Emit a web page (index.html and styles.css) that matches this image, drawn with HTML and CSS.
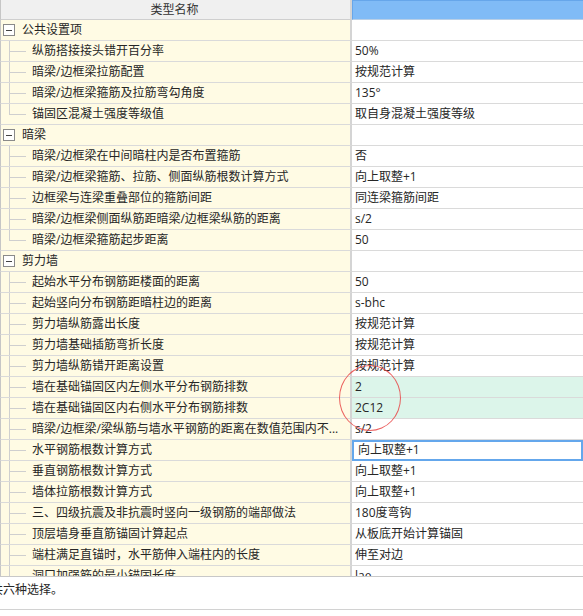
FILE: index.html
```html
<!DOCTYPE html>
<html lang="zh-CN">
<head>
<meta charset="utf-8">
<title>设置</title>
<link rel="stylesheet" href="styles.css">
</head>
<body>
<div class="page">
  <div class="table">
    <div class="row head">
      <div class="name">类型名称</div>
      <div class="val"></div>
    </div>

    <div class="row group">
      <div class="name"><span class="box"></span>公共设置项</div>
      <div class="val"></div>
    </div>
    <div class="row"><div class="name child">纵筋搭接接头错开百分率</div><div class="val">50%</div></div>
    <div class="row"><div class="name child">暗梁/边框梁拉筋配置</div><div class="val">按规范计算</div></div>
    <div class="row"><div class="name child">暗梁/边框梁箍筋及拉筋弯勾角度</div><div class="val">135°</div></div>
    <div class="row"><div class="name child last">锚固区混凝土强度等级值</div><div class="val">取自身混凝土强度等级</div></div>

    <div class="row group">
      <div class="name"><span class="box"></span>暗梁</div>
      <div class="val"></div>
    </div>
    <div class="row"><div class="name child">暗梁/边框梁在中间暗柱内是否布置箍筋</div><div class="val">否</div></div>
    <div class="row"><div class="name child">暗梁/边框梁箍筋、拉筋、侧面纵筋根数计算方式</div><div class="val">向上取整+1</div></div>
    <div class="row"><div class="name child">边框梁与连梁重叠部位的箍筋间距</div><div class="val">同连梁箍筋间距</div></div>
    <div class="row"><div class="name child">暗梁/边框梁侧面纵筋距暗梁/边框梁纵筋的距离</div><div class="val">s/2</div></div>
    <div class="row"><div class="name child last">暗梁/边框梁箍筋起步距离</div><div class="val">50</div></div>

    <div class="row group">
      <div class="name"><span class="box"></span>剪力墙</div>
      <div class="val"></div>
    </div>
    <div class="row"><div class="name child">起始水平分布钢筋距楼面的距离</div><div class="val">50</div></div>
    <div class="row"><div class="name child">起始竖向分布钢筋距暗柱边的距离</div><div class="val">s-bhc</div></div>
    <div class="row"><div class="name child">剪力墙纵筋露出长度</div><div class="val">按规范计算</div></div>
    <div class="row"><div class="name child">剪力墙基础插筋弯折长度</div><div class="val">按规范计算</div></div>
    <div class="row"><div class="name child">剪力墙纵筋错开距离设置</div><div class="val">按规范计算</div></div>
    <div class="row"><div class="name child">墙在基础锚固区内左侧水平分布钢筋排数</div><div class="val changed">2</div></div>
    <div class="row"><div class="name child">墙在基础锚固区内右侧水平分布钢筋排数</div><div class="val changed">2C12</div></div>
    <div class="row"><div class="name child">暗梁/边框梁/梁纵筋与墙水平钢筋的距离在数值范围内不...</div><div class="val">s/2</div></div>
    <div class="row"><div class="name child">水平钢筋根数计算方式</div><div class="val selected">向上取整+1</div></div>
    <div class="row"><div class="name child">垂直钢筋根数计算方式</div><div class="val">向上取整+1</div></div>
    <div class="row"><div class="name child">墙体拉筋根数计算方式</div><div class="val">向上取整+1</div></div>
    <div class="row"><div class="name child">三、四级抗震及非抗震时竖向一级钢筋的端部做法</div><div class="val">180度弯钩</div></div>
    <div class="row"><div class="name child">顶层墙身垂直筋锚固计算起点</div><div class="val">从板底开始计算锚固</div></div>
    <div class="row"><div class="name child">端柱满足直锚时，水平筋伸入端柱内的长度</div><div class="val">伸至对边</div></div>
    <div class="row"><div class="name child">洞口加强筋的最小锚固长度</div><div class="val">lae</div></div>
  </div>
  <div class="desc">共六种选择。</div>
  <div class="mark"></div>
</div>
</body>
</html>
```

FILE: styles.css
```css
html, body {
  margin: 0;
  padding: 0;
  background: #ffffff;
}

body {
  font-family: "Open Sans", "Noto Sans CJK SC", sans-serif;
  font-size: 12px;
  color: #262626;
}

.page {
  position: relative;
  width: 583px;
  height: 616px;
  overflow: hidden;
}

.table {
  height: 576px;
  overflow: hidden;
  border-bottom: 1px solid #c8c8c8;
}

.row {
  display: flex;
  height: 21px;
}

.name {
  box-sizing: border-box;
  width: 352px;
  flex: none;
  height: 21px;
  border-left: 1px solid #c6c6c6;
  border-right: 2px solid #d4d4d4;
  border-bottom: 1px solid #dadada;
  background: #fffbe4;
  line-height: 20px;
  white-space: nowrap;
  overflow: hidden;
}

.val {
  box-sizing: border-box;
  flex: 1;
  height: 21px;
  padding-left: 3px;
  border-bottom: 1px solid #dadada;
  background: #ffffff;
  line-height: 20px;
  white-space: nowrap;
  overflow: hidden;
}

/* header */
.head {
  height: 20px;
}

.head .name {
  height: 20px;
  line-height: 19px;
  text-align: center;
  background: #f0f0f0;
  border-bottom: 1px solid #cfcfcf;
  color: #333;
  padding-right: 2px;
}

.head .val {
  height: 20px;
  background: #80bbf6;
  border-top: 1px solid #66a6ea;
  border-left: 1px solid #66a6ea;
  border-bottom: 1px solid #b9cfe6;
}

/* groups */
.group .name {
  display: flex;
  align-items: center;
  padding-left: 2px;
}

.group .val {
  background: #ffffff;
}

.box {
  box-sizing: border-box;
  width: 12px;
  height: 12px;
  margin-right: 7px;
  border: 1px solid #8a8a8a;
  background: linear-gradient(#444, #444) center / 6px 1px no-repeat, #ffffff;
  flex: none;
}

/* tree children */
.child {
  padding-left: 31px;
  background:
    linear-gradient(#cfcfcf, #cfcfcf) 8px 0 / 1px 100% no-repeat,
    linear-gradient(#cfcfcf, #cfcfcf) 9px 10px / 16px 1px no-repeat,
    #fffbe4;
}

.child.last {
  background:
    linear-gradient(#cfcfcf, #cfcfcf) 8px 0 / 1px 11px no-repeat,
    linear-gradient(#cfcfcf, #cfcfcf) 9px 10px / 16px 1px no-repeat,
    #fffbe4;
}

.changed {
  background: #dcf5ea;
}

.selected {
  padding-left: 6px;
  outline: 2px solid #64a7ec;
  outline-offset: -2px;
}

/* description */
.desc {
  box-sizing: border-box;
  height: 33px;
  padding-top: 3px;
  margin-left: -9px;
  line-height: 20px;
  border-bottom: 1px solid #d2d2d2;
  color: #262626;
}

/* red annotation ellipse */
.mark {
  position: absolute;
  left: 339px;
  top: 365px;
  width: 62px;
  height: 66px;
  box-sizing: border-box;
  border: 1px solid rgba(232, 70, 70, 0.85);
  border-radius: 50%;
  pointer-events: none;
}
```
